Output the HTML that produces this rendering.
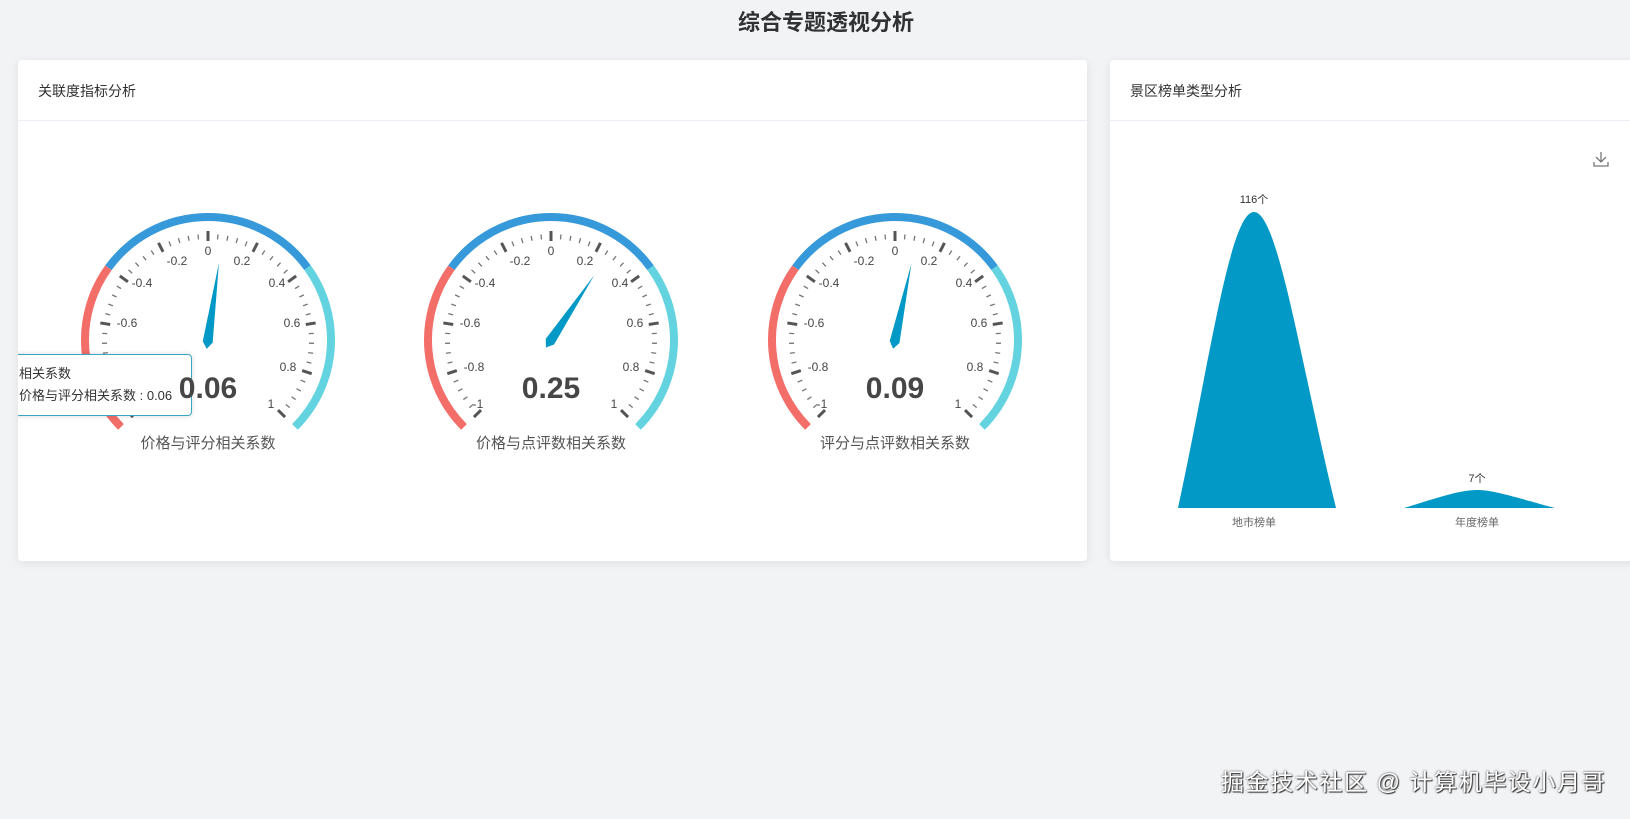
<!DOCTYPE html>
<html><head><meta charset="utf-8">
<style>
body{margin:0;width:1630px;height:819px;background:#f2f3f5;font-family:"Liberation Sans","Noto Sans CJK SC",sans-serif;position:relative;overflow:hidden}
.title{position:absolute;top:8px;left:0;width:1652px;text-align:center;font-size:22px;font-weight:bold;color:#303133;line-height:30px}
.card{position:absolute;top:60px;height:501px;background:#fff;border-radius:4px;box-shadow:0 2px 10px rgba(0,0,0,.08);overflow:hidden}
.hd{height:60px;border-bottom:1px solid #ebeef5;font-size:14px;color:#303133;line-height:62px;padding-left:20px}
.tip{position:absolute;left:-30px;top:294px;width:204px;height:62px;border:1px solid #3aa6c4;border-radius:4px;background:#fff;box-shadow:0 0 6px rgba(0,0,0,.15);font-size:13px;color:#333;line-height:22px;padding:8px 0 0 0;box-sizing:border-box}
.tip div{padding-left:30px}
.wm{position:absolute;left:1221px;top:763px;font-size:23px;color:#fff;text-shadow:0 0 2px #333,1px 1px 1px #333;letter-spacing:1.6px}
</style></head><body>
<div class="title">综合专题透视分析</div>
<div class="card" style="left:18px;width:1069px">
<div class="hd">关联度指标分析</div>
<svg width="1069" height="440" style="position:absolute;left:0;top:61px" font-family="Liberation Sans,Noto Sans CJK SC,sans-serif">
<g id="g1" transform="translate(190,219)"></g>
<g id="g2" transform="translate(533,219)"></g>
<g id="g3" transform="translate(877,219)"></g>
</svg>
<div class="tip"><div>相关系数</div><div>价格与评分相关系数 : 0.06</div></div>
</div>
<div class="card" style="left:1110px;width:540px">
<div class="hd">景区榜单类型分析</div>
<svg width="540" height="501" style="position:absolute;left:0;top:0" font-family="Liberation Sans,Noto Sans CJK SC,sans-serif">
<g stroke="#777" stroke-width="1.3" fill="none"><path d="M491 92v10M486 97l5 5 5-5M484 102v4h14v-4"/></g>
<path d="M68 448 C100 300 120 152 144 152 C168 152 190 300 226 448Z" fill="#0399c6"/>
<path d="M294 448 C330 437 350 430 367 430 C384 430 404 437 445 448Z" fill="#0399c6"/>
<text x="144" y="143" font-size="11" fill="#333" text-anchor="middle">116个</text>
<text x="367" y="422" font-size="11" fill="#333" text-anchor="middle">7个</text>
<text x="144" y="466" font-size="11" fill="#666" text-anchor="middle">地市榜单</text>
<text x="367" y="466" font-size="11" fill="#666" text-anchor="middle">年度榜单</text>
</svg>
</div>
<div class="wm">掘金技术社区 @ 计算机毕设小月哥</div>
<template id="lbl">
<g font-size="12" fill="#464646" text-anchor="middle">
<text x="-73" y="68">-1</text><text x="-77" y="31">-0.8</text><text x="-81" y="-13">-0.6</text>
<text x="-66" y="-53">-0.4</text><text x="-31" y="-75">-0.2</text><text x="0" y="-85">0</text>
<text x="34" y="-75">0.2</text><text x="69" y="-53">0.4</text><text x="84" y="-13">0.6</text>
<text x="80" y="31">0.8</text><text x="63" y="68">1</text></g>
</template>
<script>
var data=[["g1",0.06],["g2",0.25],["g3",0.09]];
function pt(r,a){a=a*Math.PI/180;return [r*Math.cos(a),-r*Math.sin(a)];}
function arc(r,a1,a2){var p=pt(r,a1),q=pt(r,a2);return "M"+p[0]+" "+p[1]+" A"+r+" "+r+" 0 0 1 "+q[0]+" "+q[1];}
data.forEach(function(d){
var g=document.getElementById(d[0]),s="";
s+='<path d="'+arc(123,225,144)+'" stroke="#f36e68" stroke-width="8" fill="none"/>';
s+='<path d="'+arc(123,144,36)+'" stroke="#3699d9" stroke-width="8" fill="none"/>';
s+='<path d="'+arc(123,36,-45)+'" stroke="#63d3e0" stroke-width="8" fill="none"/>';
for(var i=0;i<=50;i++){var a=225-i*5.4,maj=i%5==0;var p=pt(maj?109:106,a),q=pt(maj?99:101,a);
s+='<line x1="'+p[0]+'" y1="'+p[1]+'" x2="'+q[0]+'" y2="'+q[1]+'" stroke="'+(maj?'#555':'#777')+'" stroke-width="'+(maj?3:1.3)+'"/>';}
s+=document.getElementById("lbl").innerHTML;
s+='<polygon points="0,-78 5,2 0,9 -5,2" fill="#0399c6" transform="rotate('+(d[1]*135)+')"/>';
g.innerHTML=s;
});
</script>
<svg width="1069" height="440" style="position:absolute;left:18px;top:121px;pointer-events:none" font-family="Liberation Sans,Noto Sans CJK SC,sans-serif">
<g font-size="30" font-weight="bold" fill="#464646" text-anchor="middle">
<text x="190" y="277">0.06</text><text x="533" y="277">0.25</text><text x="877" y="277">0.09</text></g>
<g font-size="15" fill="#555" text-anchor="middle">
<text x="190" y="327">价格与评分相关系数</text><text x="533" y="327">价格与点评数相关系数</text><text x="877" y="327">评分与点评数相关系数</text></g>
</svg>
</body></html>
